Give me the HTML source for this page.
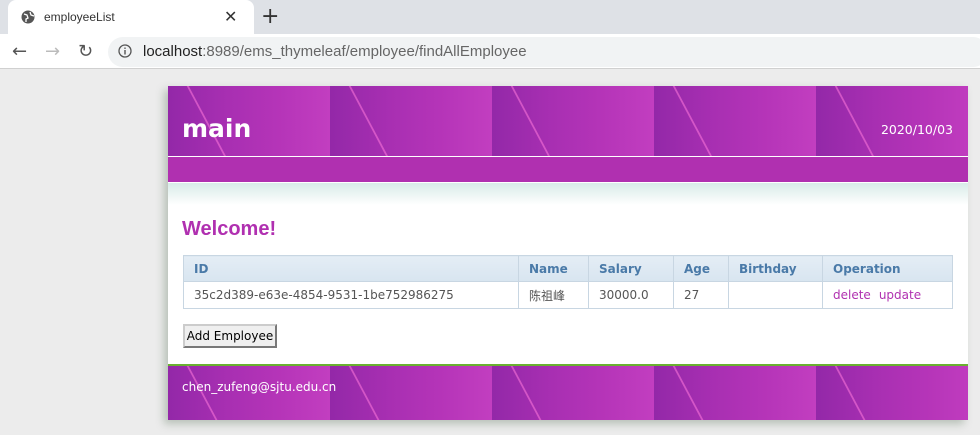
<!DOCTYPE html>
<html><head><meta charset="utf-8"><style>
*{margin:0;padding:0;box-sizing:border-box}
body{width:980px;height:435px;overflow:hidden;background:#ececec;font-family:"DejaVu Sans","Liberation Sans","Noto Sans CJK SC",sans-serif;position:relative}
.tabbar{position:absolute;left:0;top:0;width:980px;height:34px;background:#dee1e6}
.tab{position:absolute;left:8px;top:0;width:246px;height:34px;background:#fff;border-radius:8px 8px 0 0}
.tab .t{position:absolute;left:36px;top:10px;font-size:12px;color:#333;font-family:"Liberation Sans",sans-serif}
.tab .x{position:absolute;left:216px;top:7px;font-size:16px;color:#333}
.plus{position:absolute;left:261px;top:4px;font-size:22px;color:#333}
.addr{position:absolute;left:0;top:34px;width:980px;height:35px;background:#fff;border-bottom:1px solid #d0d0d0}
.pill{position:absolute;left:108px;top:3px;width:880px;height:30px;background:#f1f3f4;border-radius:15px}
.url{position:absolute;left:143px;top:43px;font-size:15px;color:#666;font-family:"Liberation Sans",sans-serif}
.url b{font-weight:normal;color:#222}
.nav{position:absolute;top:41px;font-size:18px;color:#555}
.box{position:absolute;left:168px;top:86px;width:800px;height:334px;background:#fff;box-shadow:-4px 4px 8px rgba(120,140,120,.45)}
.tiles{background:repeating-linear-gradient(90deg,#9328a8 0px,#a82fb2 60px,#b534b8 110px,#c23ec0 162px)}
.hd{position:absolute;left:0;top:0;width:800px;height:70px;overflow:hidden}
.curve{position:absolute;top:-10px;width:40px;height:100px;border-left:2px solid rgba(255,120,220,.55);transform:skewX(28deg)}
.hd h1{position:absolute;left:14px;top:28px;color:#fff;font-size:25px;font-weight:bold}
.date{position:absolute;right:15px;top:36px;color:#fff;font-size:12.5px}
.band{position:absolute;left:0;top:71px;width:800px;height:25px;background:#b030b0}
.grad{position:absolute;left:0;top:97px;width:800px;height:22px;background:linear-gradient(#d8ebe8,#fff)}
.wel{position:absolute;left:14px;top:132px;color:#b030b0;font-size:20px;font-weight:bold;font-family:"Liberation Sans",sans-serif}
table{position:absolute;left:15px;top:169px;width:770px;border-collapse:collapse;font-size:12px}
td,th{border:1px solid #c8d6e2;height:27px;padding:0 10px;text-align:left}
th{background:linear-gradient(#e4edf5,#d8e5f0);color:#4a7aa8;font-weight:bold;height:26px}
td{color:#555}
td a{color:#b030b0;margin-right:8px}
.btn{position:absolute;left:15px;top:238px;width:94px;height:24px;border:2px outset #ccc;background:#efefef;font-size:12px;color:#000;text-align:center;line-height:20px}
.ft{position:absolute;left:0;top:278px;width:800px;height:56px;border-top:2px solid #6ab030;overflow:hidden}
.ft span{position:absolute;left:14px;top:14px;color:#fff;font-size:12px}
</style></head><body>
<div class="tabbar"><div class="tab"><svg style="position:absolute;left:13px;top:10px" width="14" height="14" viewBox="0 0 14 14"><circle cx="7" cy="7" r="6.5" fill="#555"/><path d="M3 4l3 1 1 3-2 1 0 3M9 2l1 3 3 1" stroke="#fff" stroke-width="1.3" fill="none"/></svg><span class="t">employeeList</span><span class="x">✕</span></div><span class="plus">+</span></div>
<div class="addr"><div class="pill"></div></div>
<span class="nav" style="left:12px">←</span><span class="nav" style="left:45px;color:#bbb">→</span><span class="nav" style="left:78px">↻</span>
<svg style="position:absolute;left:118px;top:44px" width="14" height="14"><circle cx="7" cy="7" r="6" stroke="#555" stroke-width="1.3" fill="none"/><rect x="6.3" y="6" width="1.4" height="4.5" fill="#555"/><rect x="6.3" y="3.5" width="1.4" height="1.4" fill="#555"/></svg>
<div class="url"><b>localhost</b>:8989/ems_thymeleaf/employee/findAllEmployee</div>
<div class="box">
<div class="hd tiles"><div class="curve" style="left:40px"></div><div class="curve" style="left:202px"></div><div class="curve" style="left:364px"></div><div class="curve" style="left:526px"></div><div class="curve" style="left:688px"></div><h1>main</h1><span class="date">2020/10/03</span></div>
<div class="band"></div><div class="grad"></div>
<div class="wel">Welcome!</div>
<table><tr><th style="width:335px">ID</th><th style="width:70px">Name</th><th style="width:85px">Salary</th><th style="width:55px">Age</th><th style="width:94px">Birthday</th><th>Operation</th></tr>
<tr><td>35c2d389-e63e-4854-9531-1be752986275</td><td>陈祖峰</td><td>30000.0</td><td>27</td><td></td><td><a>delete</a><a>update</a></td></tr></table>
<div class="btn">Add Employee</div>
<div class="ft tiles"><div class="curve" style="left:40px"></div><div class="curve" style="left:202px"></div><div class="curve" style="left:364px"></div><div class="curve" style="left:526px"></div><div class="curve" style="left:688px"></div><span>chen_zufeng@sjtu.edu.cn</span></div>
</div>
</body></html>
